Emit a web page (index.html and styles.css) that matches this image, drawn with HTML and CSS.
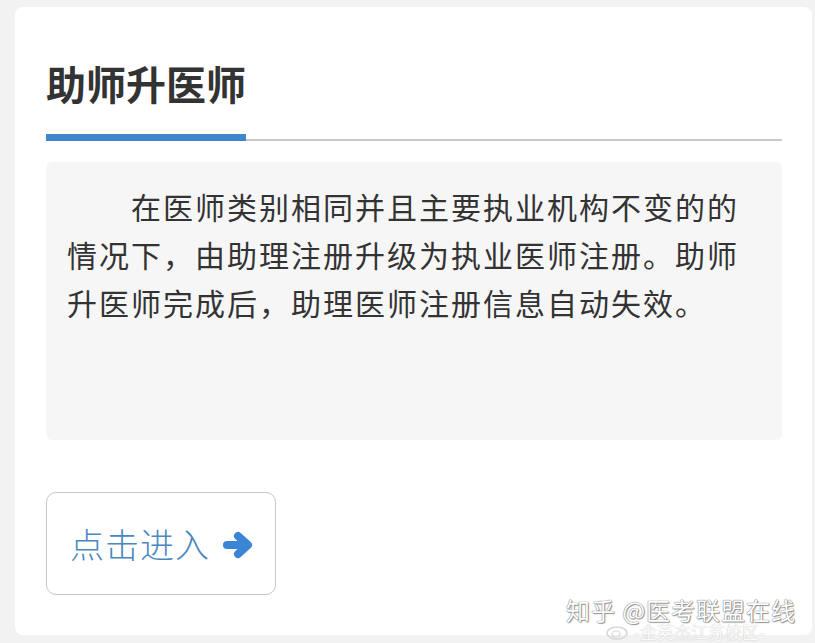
FILE: index.html
```html
<!DOCTYPE html>
<html lang="zh">
<head>
<meta charset="utf-8">
<link rel="stylesheet" href="styles.css">
</head>
<body>
<div class="card">
  <h1 class="title">助师升医师</h1>
  <div class="tabline"><span class="tabbar"></span></div>
  <div class="desc">
    <p>在医师类别相同并且主要执业机构不变的的情况下，由助理注册升级为执业医师注册。助师升医师完成后，助理医师注册信息自动失效。</p>
  </div>
  <a class="enter" href="#">点击进入
    <svg class="arrow" width="30" height="28" viewBox="0 0 30 28"><line x1="4" y1="14" x2="22" y2="14" stroke="#3b86d4" stroke-width="8" stroke-linecap="round"/><polyline points="15,5 25,14 15,23" fill="none" stroke="#3b86d4" stroke-width="8" stroke-linecap="round" stroke-linejoin="round"/></svg>
  </a>
  <div class="watermark">
    <span class="wm1">知乎 @医考联盟在线</span>
    <span class="wm2"><svg class="weibo" width="26" height="16" viewBox="0 0 26 16"><ellipse cx="12" cy="9" rx="10" ry="6" fill="none" stroke="#d8d8d8" stroke-width="1.5"/><ellipse cx="11" cy="10" rx="4" ry="3" fill="none" stroke="#d8d8d8" stroke-width="1.2"/></svg>-金英杰江苏校区-</span>
  </div>
</div>
</body>
</html>
```

FILE: styles.css
```css
html, body {
  margin: 0;
  padding: 0;
  background: #f2f2f2;
}
body {
  font-family: "Noto Sans CJK SC", "Noto Sans", sans-serif;
  color: #333;
  padding: 7px 3px 8px 15px;
}
.card {
  position: relative;
  background: #fff;
  border-radius: 8px;
  height: 628px;
  box-sizing: border-box;
  padding: 56px 30px 0 31px;
}
.title {
  margin: 0;
  font-size: 40px;
  line-height: 40px;
  font-weight: 700;
  color: #333;
  letter-spacing: 0;
}
.tabline {
  margin-top: 31px;
  border-bottom: 2px solid #c9c9c9;
  height: 5px;
}
.tabbar {
  display: block;
  width: 200px;
  height: 7px;
  background: #3f86cc;
}
.desc {
  margin-top: 21px;
  background: #f6f6f6;
  border-radius: 6px;
  height: 278px;
  box-sizing: border-box;
  padding: 20px 20px 0 21px;
}
.desc p {
  margin: 0;
  font-size: 30px;
  line-height: 48px;
  letter-spacing: 2px;
  text-indent: 64px;
  color: #333;
}
.enter {
  display: flex;
  align-items: center;
  margin-top: 52px;
  width: 230px;
  height: 103px;
  box-sizing: border-box;
  border: 1.5px solid #c6c6c6;
  border-radius: 10px;
  padding-left: 23px;
  gap: 13px;
  font-size: 34px;
  font-weight: 300;
  color: #4a87c2;
  text-decoration: none;
  letter-spacing: 1px;
}
.arrow {
  display: block;
  margin-top: 2px;
}
.watermark {
  position: absolute;
  right: 14px;
  top: 590px;
  width: 232px;
  height: 44px;
}
.wm1 {
  position: absolute;
  left: 0;
  top: 0;
  font-size: 24px;
  line-height: 26px;
  letter-spacing: 1px;
  color: #fff;
  white-space: nowrap;
  text-shadow: 0 0 1px #777, 0 0 1px #777, 1px 1px 1px #999;
}
.wm2 {
  position: absolute;
  left: 39px;
  top: 27px;
  display: flex;
  align-items: center;
  gap: 3px;
  font-size: 17px;
  line-height: 16px;
  color: #fbfbfb;
  white-space: nowrap;
  text-shadow: 0 0 1px #b0b0b0;
}
.weibo {
  display: block;
}
```
